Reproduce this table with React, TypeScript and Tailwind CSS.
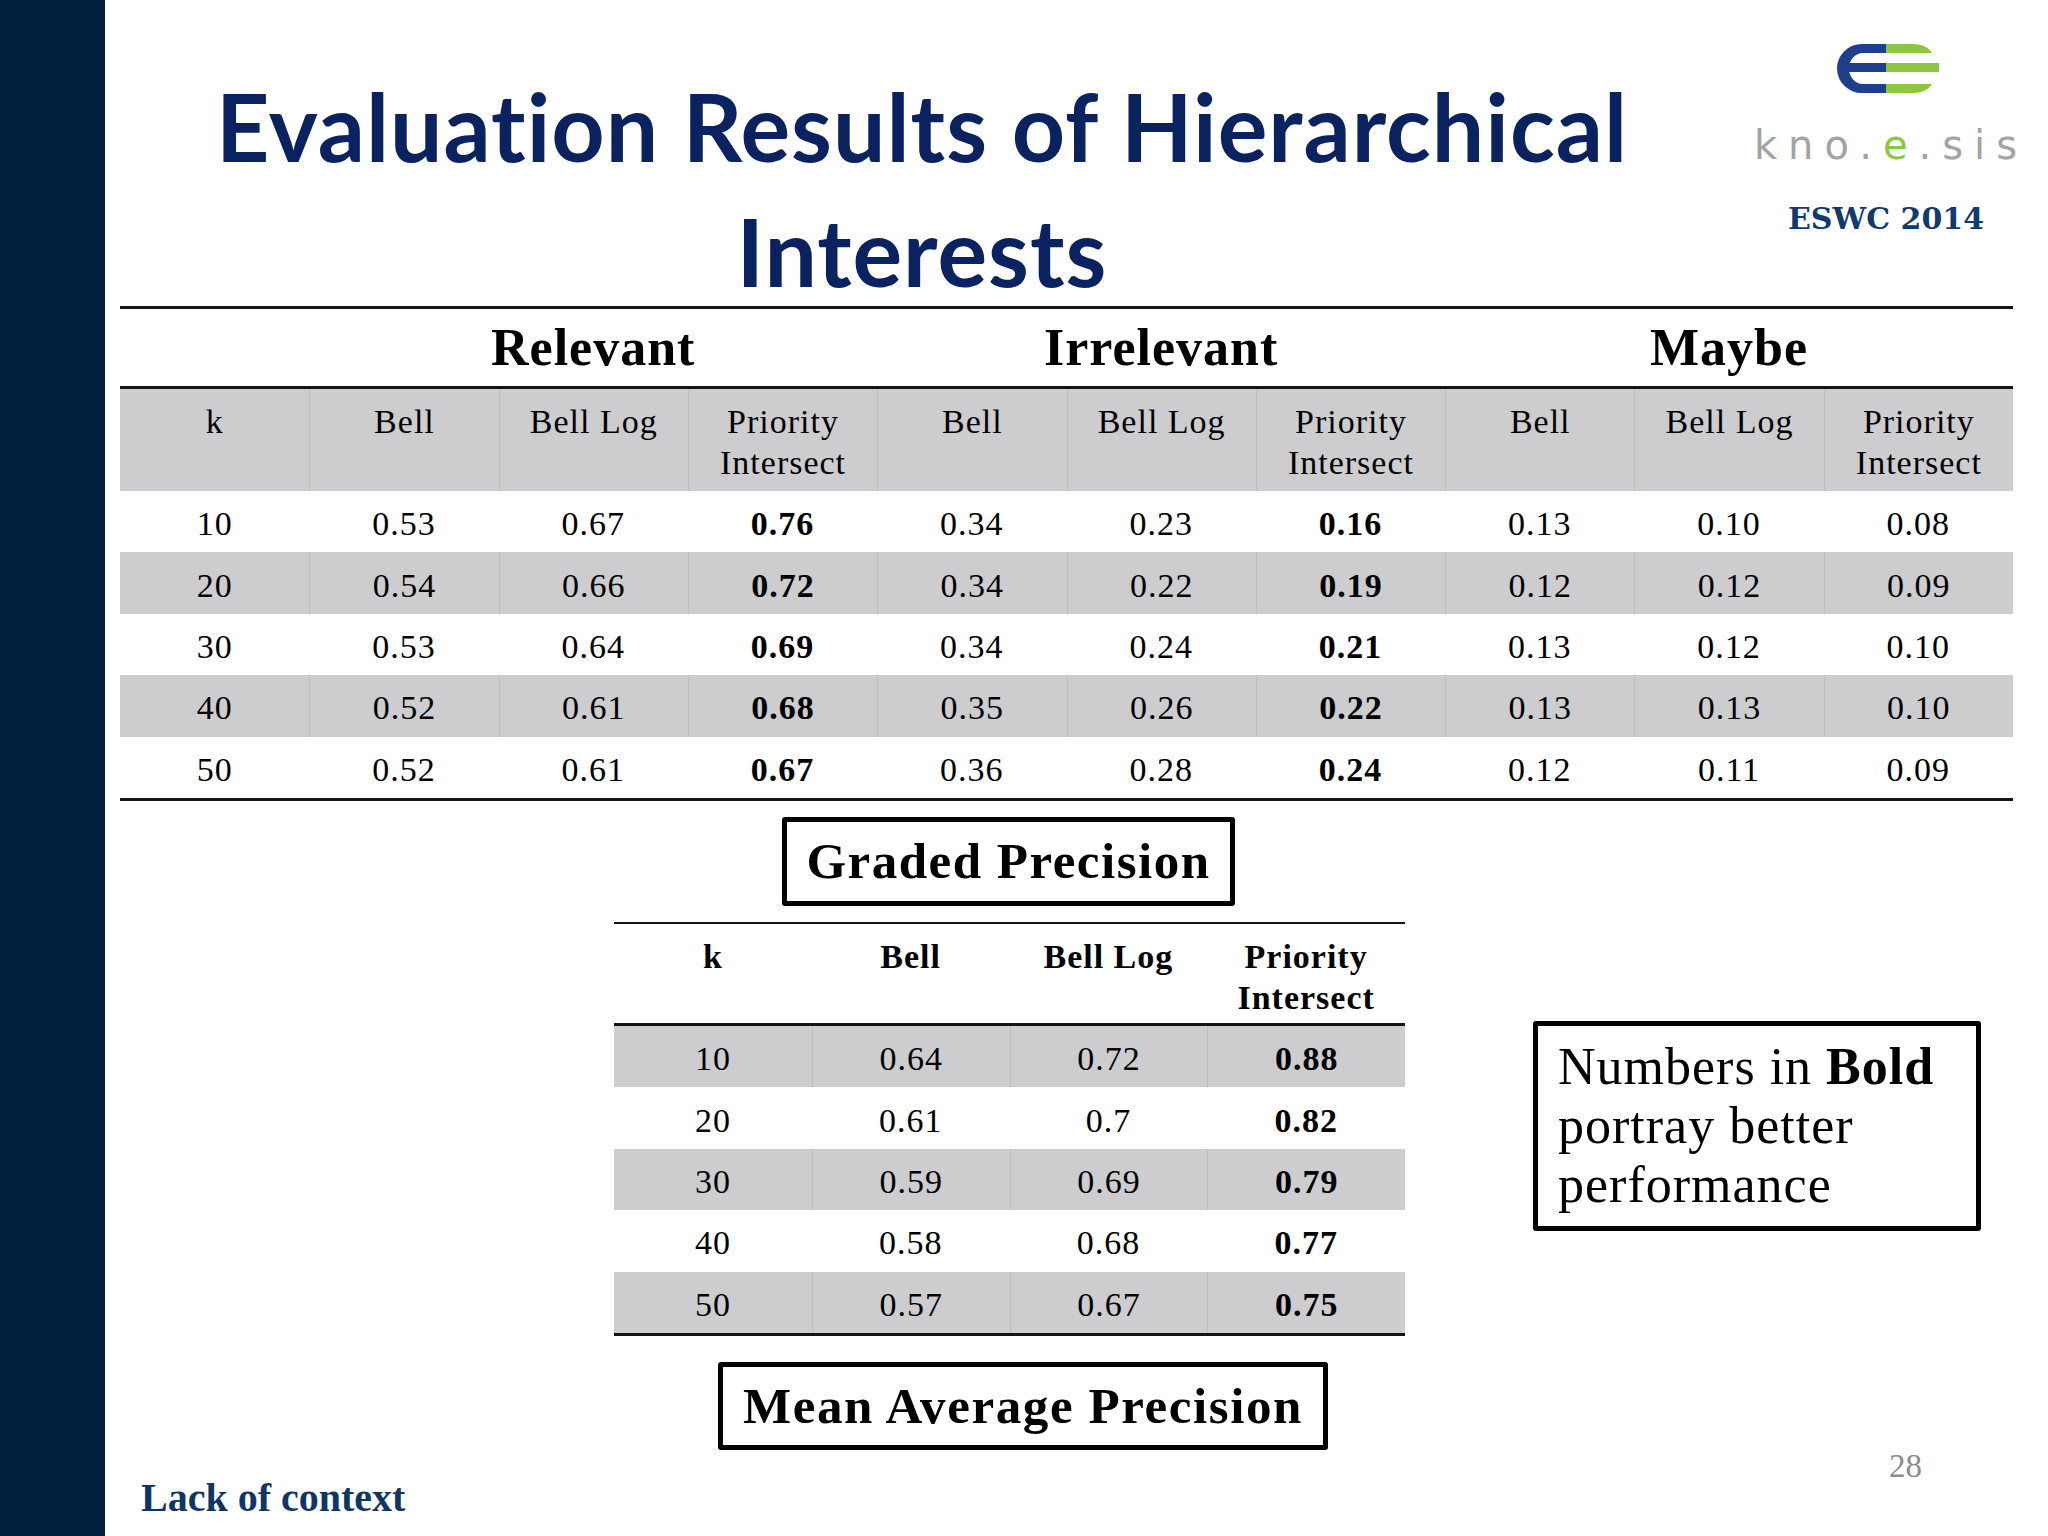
import React from "react";

const groups = ["Relevant", "Irrelevant", "Maybe"];
const subCols = ["Bell", "Bell Log", "Priority Intersect"];

const mainRows: string[][] = [
  ["10", "0.53", "0.67", "0.76", "0.34", "0.23", "0.16", "0.13", "0.10", "0.08"],
  ["20", "0.54", "0.66", "0.72", "0.34", "0.22", "0.19", "0.12", "0.12", "0.09"],
  ["30", "0.53", "0.64", "0.69", "0.34", "0.24", "0.21", "0.13", "0.12", "0.10"],
  ["40", "0.52", "0.61", "0.68", "0.35", "0.26", "0.22", "0.13", "0.13", "0.10"],
  ["50", "0.52", "0.61", "0.67", "0.36", "0.28", "0.24", "0.12", "0.11", "0.09"],
];

const mapRows: string[][] = [
  ["10", "0.64", "0.72", "0.88"],
  ["20", "0.61", "0.7", "0.82"],
  ["30", "0.59", "0.69", "0.79"],
  ["40", "0.58", "0.68", "0.77"],
  ["50", "0.57", "0.67", "0.75"],
];

function HeaderLabel({ text }: { text: string }) {
  if (text === "Priority Intersect") {
    return (
      <>
        <div>Priority</div>
        <div>Intersect</div>
      </>
    );
  }
  return <div>{text}</div>;
}

function Logo() {
  return (
    <svg width="150" height="80" viewBox="0 0 150 80" className="ml-[12px] mt-[30px]">
      <path
        d="M69 14 H45 A25 24.5 0 0 0 45 63 H69 V54 H46 A14 15.5 0 0 1 46 23 H69 Z"
        fill="#1e3f8c"
      />
      <rect x="31" y="33" width="38" height="9" fill="#1e3f8c" />
      <path d="M69 14 H96 C106 14 112 18 115 23 H69 Z" fill="#8dc63f" />
      <path d="M69 63 H96 C106 63 112 59 115 54 H69 Z" fill="#8dc63f" />
      <rect x="69" y="33" width="53" height="9" fill="#8dc63f" />
    </svg>
  );
}

export default function App() {
  return (
    <div className="flex h-[1536px] w-[2048px] overflow-hidden bg-white font-['Liberation_Serif',serif] text-black">
      <div className="h-full w-[105px] shrink-0 bg-[#02203e]" />
      <div className="flex min-w-0 flex-1 flex-col pl-[15px] pr-[35px]">
        {/* Header */}
        <div className="flex h-[306px]">
          <div className="flex-1 pt-[64px] text-center font-['Lato',sans-serif] text-[93px] font-bold leading-[125px] tracking-[1px] text-[#0b2261]">
            <div>Evaluation Results of Hierarchical</div>
            <div>Interests</div>
          </div>
          <div className="-mr-[35px] flex w-[324px] shrink-0 flex-col items-center">
            <Logo />
            <div className="ml-[10px] mt-[15px] font-['DejaVu_Sans',sans-serif] text-[40px] leading-[40px] tracking-[11px] text-[#a3a3a3]">
              kno.<span className="text-[#8dc63f]">e</span>.sis
            </div>
            <div className="mt-[39px] font-['DejaVu_Serif',serif] text-[30px] font-bold leading-[30px] text-[#123a6e]">
              ESWC 2014
            </div>
          </div>
        </div>

        {/* Main table */}
        <div className="h-[3px] bg-[#141414]" />
        <div className="grid h-[77px] grid-cols-10 text-[52px] font-bold leading-[77px] tracking-[1px]">
          <div />
          {groups.map((g) => (
            <div key={g} className="col-span-3 text-center">
              {g}
            </div>
          ))}
        </div>
        <div className="h-[3px] bg-[#141414]" />
        <div className="grid h-[102px] grid-cols-10 bg-[#cdcdd0] text-[34px] leading-[41px] tracking-[1px]">
          <div className="pt-[12px] text-center">k</div>
          {groups.map((g) =>
            subCols.map((c) => (
              <div key={g + c} className="border-l border-[#bdbdc1] pt-[12px] text-center">
                <HeaderLabel text={c} />
              </div>
            ))
          )}
        </div>
        {mainRows.map((row, ri) => (
          <div
            key={ri}
            className={`grid h-[61.4px] grid-cols-10 text-[34px] tracking-[1px] ${ri % 2 === 1 ? "bg-[#cdcdd0]" : "bg-white"}`}
          >
            {row.map((v, ci) => (
              <div
                key={ci}
                className={`flex items-center justify-center pt-[4px] ${ci > 0 && ri % 2 === 1 ? "border-l border-[#bdbdc1]" : ""} ${ci === 3 || ci === 6 ? "font-bold" : ""}`}
              >
                {v}
              </div>
            ))}
          </div>
        ))}
        <div className="h-[3px] bg-[#141414]" />

        {/* Lower section */}
        <div className="flex pl-[494px]">
          <div className="flex w-[791px] shrink-0 flex-col">
            <div className="ml-[168px] mt-[16px] flex h-[89px] w-[453px] items-center justify-center rounded-[3px] border-[5px] border-black text-[51px] font-bold tracking-[1.5px]">
              Graded Precision
            </div>
            <div className="mt-[16px] h-[2px] bg-[#141414]" />
            <div className="grid h-[99px] grid-cols-4 text-[34px] font-bold leading-[41px] tracking-[1px]">
              {["k", "Bell", "Bell Log", "Priority Intersect"].map((c) => (
                <div key={c} className="pt-[12px] text-center">
                  <HeaderLabel text={c} />
                </div>
              ))}
            </div>
            <div className="h-[3px] bg-[#141414]" />
            {mapRows.map((row, ri) => (
              <div
                key={ri}
                className={`grid h-[61.4px] grid-cols-4 text-[34px] tracking-[1px] ${ri % 2 === 0 ? "bg-[#cdcdd0]" : "bg-white"}`}
              >
                {row.map((v, ci) => (
                  <div
                    key={ci}
                    className={`flex items-center justify-center pt-[4px] ${ci > 0 && ri % 2 === 0 ? "border-l border-[#bdbdc1]" : ""} ${ci === 3 ? "font-bold" : ""}`}
                  >
                    {v}
                  </div>
                ))}
              </div>
            ))}
            <div className="h-[3px] bg-[#141414]" />
            <div className="ml-[104px] mt-[26px] flex h-[88px] w-[610px] items-center justify-center rounded-[3px] border-[5px] border-black text-[51px] font-bold tracking-[1.6px]">
              Mean Average Precision
            </div>
          </div>
          <div className="ml-[128px] flex flex-col">
            <div className="mt-[220px] h-[210px] w-[448px] rounded-[3px] border-[5px] border-black pl-[20px] pt-[11px] text-[52px] leading-[59px] tracking-[1px]">
              <div>
                Numbers in <span className="font-bold">Bold</span>
              </div>
              <div>portray better</div>
              <div>performance</div>
            </div>
            <div className="ml-[356px] mt-[216px] text-[33px] leading-[38px] text-[#8c8c8c]">28</div>
          </div>
        </div>

        {/* Footer */}
        <div className="-mt-[9px] ml-[21px] text-[40px] font-bold leading-[44px] text-[#0f3566]">Lack of context</div>
      </div>
    </div>
  );
}
